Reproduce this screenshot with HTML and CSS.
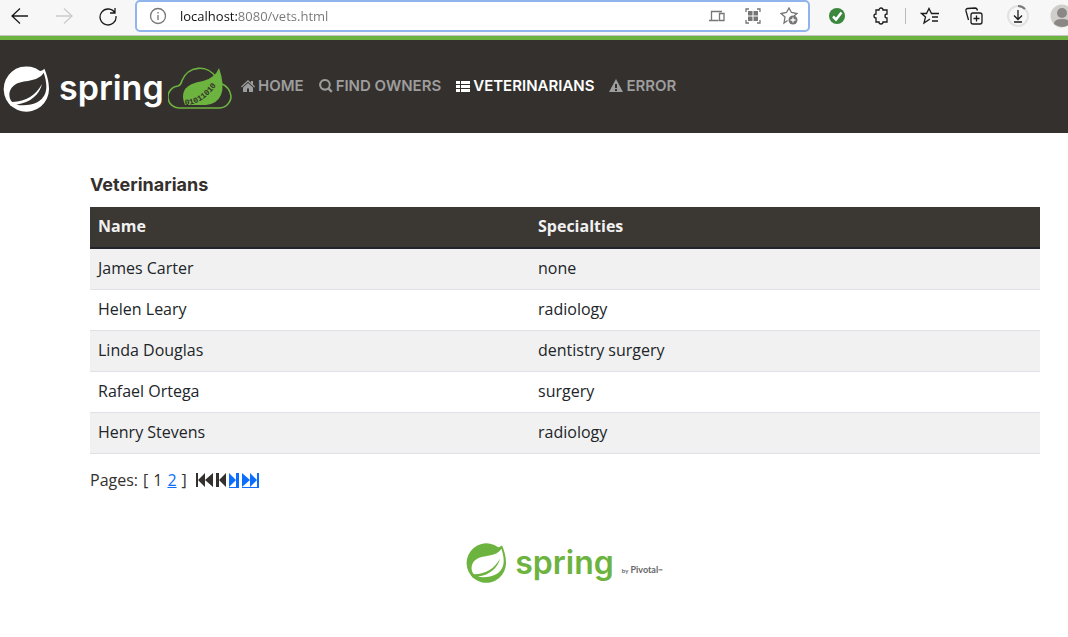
FILE: index.html
```html
<!DOCTYPE html>
<html lang="en">
<head>
<meta charset="utf-8">
<title>PetClinic :: Veterinarians</title>
<link rel="stylesheet" href="styles.css">
</head>
<body>
<svg class="defs" aria-hidden="true">
  <symbol id="leaf" viewBox="0 0 138 138">
    <path fill="currentColor" fill-rule="evenodd" d="M124 8 C131 24 138 45 138 68 A68 68 0 1 1 111 15 C117 14 121 11 124 8 Z M122 20 C104 50 60 40 36 56 C14 70 16 98 28 108 C70 106 98 88 117 54 C110 84 84 110 40 116 C60 120 86 118 104 108 C136 88 134 56 122 20 Z"/>
    <circle cx="27" cy="115" r="6" fill="currentColor"/>
  </symbol>
</svg>

<div class="toolbar">
  <div class="tools">
    <button class="tool" aria-label="Back"><svg viewBox="0 0 20 20"><path d="M18 10H2M10 2.500L2 10l8 7.500"/></svg></button>
    <button class="tool faded" aria-label="Forward"><svg viewBox="0 0 20 20"><path d="M2 10h16M10 2.500l8 7.500-8 7.500"/></svg></button>
    <button class="tool" aria-label="Reload"><svg viewBox="0 0 20 20"><path d="M17 7a8 8 0 1 0 1 3M17 2v5h-5"/></svg></button>
  </div>
  <div class="address">
    <svg class="small" viewBox="0 0 18 18"><circle cx="9" cy="9" r="7.500"/><path d="M9 8v5M9 5v1.500"/></svg>
    <input class="url" type="text" aria-label="Address" value="localhost:8080/vets.html">
    <svg class="small" viewBox="0 0 18 18"><path d="M3.500 13V4.500H14M1 13.500h9.500M11.500 6.500h4.500v7h-4.500z"/></svg>
    <svg class="small" viewBox="0 0 18 18"><path d="M2 5V2h3M13 2h3v3M16 13v3h-3M5 16H2v-3"/><path class="solid" d="M4 4h4.500v4.500H4zM9.500 4H14v4.500H9.500zM4 9.500h4.500V14H4zM9.500 9.500H14V14H9.500z"/></svg>
    <svg class="small" viewBox="0 0 18 18"><path d="M7.500 13.500L4 16l1-6L1 6.500l5.500-1L9 1l2.500 4.500 5.500 1-3 2.500"/><circle class="solid" cx="13" cy="13" r="4.500"/><path class="plus" d="M13 10.500v5M10.500 13h5"/></svg>
  </div>
  <div class="tools">
    <button class="tool" aria-label="Extension"><svg viewBox="0 0 20 20"><circle cx="10" cy="10" r="8" class="green"/><path class="tick" d="M6 10.500l3 3 5.500-7"/></svg></button>
    <button class="tool" aria-label="Extensions"><svg viewBox="0 0 20 20"><path d="M5 4h3a2 2 0 0 1 4 0h4v4a2 2 0 0 0 0 4v4h-4a2 2 0 0 1-4 0H5v-4a2 2 0 1 1 0-4z"/></svg></button>
  </div>
  <div class="tools ruled">
    <button class="tool" aria-label="Favorites"><svg viewBox="0 0 20 20"><path d="M10 13l-6 4 1.500-6L1.500 7.500h5L9 2.500l2.500 5H19M12 11h6M12 15h6"/></svg></button>
    <button class="tool" aria-label="Collections"><svg viewBox="0 0 20 20"><rect x="7" y="7" width="11" height="11" rx="2"/><path d="M12.500 9.500v6M9.500 12.500h6M4.500 14L2 5q-.5-2 1.500-2.500L11 2q2 0 2.500 2.500"/></svg></button>
    <button class="tool" aria-label="Downloads"><svg class="large" viewBox="0 0 24 24"><circle class="ring" cx="12" cy="12" r="10"/><path class="arc" d="M12 2a10 10 0 0 1 7 3"/><path d="M12 6v9M8 11.500l4 4 4-4M8 18h8"/></svg></button>
    <button class="tool" aria-label="Profile"><svg class="large" viewBox="0 0 24 24"><circle cx="12" cy="12" r="11.500" class="face"/><circle cx="12" cy="9" r="5" class="person"/><path class="person" d="M4 20q0-5 8-5t8 5q-8 6-16 0z"/></svg></button>
  </div>
</div>

<nav class="navbar">
  <a class="brand" href="#" aria-label="Spring">
    <svg class="leaf"><use href="#leaf"/></svg>
    <span class="wordmark">spring</span>
    <svg class="cloud" viewBox="0 0 64 44"><path class="outline" d="M12 42a11 11 0 0 1-2-22q3-1 4-5.500a19 19 0 0 1 34-3M52 17q10 4 11 13a12 12 0 0 1-12 12H12"/><path class="fill" d="M51 2q6 17 2 27-4 9-15 10H17q-4-9 0-16 5-6 18-8 12-3 16-13z"/><path id="arc" fill="none" d="M17 39q18 0 33-22"/><text class="bits"><textPath href="#arc">01011010</textPath></text></svg>
  </a>
  <ul class="menu">
    <li><a href="#"><svg viewBox="0 0 14 14"><path d="M7 1L0 7.500l.8.9L7 2.800l6.200 5.600.8-.9-2-1.900V2h-2v1.800zM2 8.500V13h4V9.500h2V13h4V8.500L7 4z"/></svg>HOME</a></li>
    <li><a href="#"><svg viewBox="0 0 14 14"><path fill-rule="evenodd" d="M6 0a5.800 5.800 0 1 0 3 10.700l3 3 1.700-1.700-3-3A5.800 5.800 0 0 0 6 0zm0 2a3.800 3.800 0 1 1 0 7.600A3.800 3.800 0 0 1 6 2z"/></svg>FIND OWNERS</a></li>
    <li><a class="active" href="#"><svg viewBox="0 0 14 14"><path d="M0 2h4v3H0zM5 2h9v3H5zM0 6h4v3H0zM5 6h9v3H5zM0 10h4v3H0zM5 10h9v3H5z"/></svg>VETERINARIANS</a></li>
    <li><a href="#"><svg viewBox="0 0 14 14"><path fill-rule="evenodd" d="M7 0l7 13H0zM6 5v4h2V5zm0 5v2h2v-2z"/></svg>ERROR</a></li>
  </ul>
</nav>

<main class="page">
  <h2 class="title">Veterinarians</h2>
  <table class="vets">
    <thead><tr><th class="name">Name</th><th>Specialties</th></tr></thead>
    <tbody>
      <tr><td>James Carter</td><td>none</td></tr>
      <tr><td>Helen Leary</td><td>radiology</td></tr>
      <tr><td>Linda Douglas</td><td>dentistry surgery</td></tr>
      <tr><td>Rafael Ortega</td><td>surgery</td></tr>
      <tr><td>Henry Stevens</td><td>radiology</td></tr>
    </tbody>
  </table>
  <div class="pages">
    <span>Pages:</span><span>[</span><span class="current">1</span><a href="#">2</a><span>]</span>
    <span class="steps">
      <svg class="wide" viewBox="0 0 17 14"><path d="M0 0h2v14H0zM9 0v14L2 7zM17 0v14L9 7z"/></svg>
      <svg class="slim" viewBox="0 0 10 14"><path d="M0 0h3v14H0zM10 0v14L3 7z"/></svg>
      <a href="#" aria-label="Next"><svg class="slim" viewBox="0 0 10 14"><path d="M7 0h3v14H7zM0 0v14l7-7z"/></svg></a>
      <a href="#" aria-label="Last"><svg class="wide" viewBox="0 0 17 14"><path d="M15 0h2v14h-2zM0 0v14l8-7zM8 0v14l7-7z"/></svg></a>
    </span>
  </div>
</main>

<footer class="footer">
  <svg class="leaf"><use href="#leaf"/></svg>
  <span class="wordmark">spring</span>
  <span class="pivotal"><small>by</small> Pivotal<small>™</small></span>
</footer>
</body>
</html>
```
FILE: styles.css
```css
* { box-sizing: border-box; }
body { margin: 0; overflow-x: hidden; background: #fff; color: #34302d; font: 16px/24px "Open Sans", "Noto Sans", sans-serif; }
a { color: #0d6efd; }
svg { display: block; flex: none; }
.defs { position: absolute; width: 0; height: 0; }

.toolbar { display: flex; align-items: flex-start; height: 36px; background: #f7f7f7; border-bottom: 1px solid #c4c4c4; overflow: hidden; }
.tools { display: flex; flex: none; }
.tool { display: flex; align-items: center; justify-content: center; width: 44px; height: 32px; padding: 0; border: 0; background: none; color: #1b1b1b; }
.tools:first-child { margin-left: -2px; margin-right: 5px; }
.tools:last-child { margin-right: -16px; }
.tool svg { width: 20px; height: 20px; fill: none; stroke: currentColor; stroke-width: 1.3; }
.tool .large { width: 24px; height: 24px; }
.tool.faded { color: #ccc; }
.ruled { position: relative; margin-left: 5px; }
.ruled::before { content: ""; position: absolute; left: -3px; top: 8px; height: 16px; border-left: 1px solid #bbb; }
.tool .green { fill: #3a873d; stroke: none; }
.tick { stroke: #fff; stroke-width: 2.5; }
.ring { stroke: #e2e2e2; stroke-width: 2; }
.arc { stroke: #777; stroke-width: 2; }
.face { fill: #d0cecb; stroke: none; }
.person { fill: #8b8784; stroke: none; }

.address { display: flex; flex: 1; align-items: center; gap: 18px; height: 32px; margin-right: 5px; padding: 0 10px 0 12px; border: 2px solid #8fb4ee; border-radius: 5px; background: #fff; color: #767676; }
.small { width: 18px; height: 18px; fill: none; stroke: currentColor; stroke-width: 1.3; }
.small .solid { fill: currentColor; stroke: none; }
.small .plus { stroke: #fff; }
.url { flex: 1; min-width: 0; margin-left: -5px; padding: 0; border: 0; outline: 0; font: 13px/20px "Open Sans", sans-serif; color: transparent; background: linear-gradient(to right, #111 57px, #767676 57px); -webkit-background-clip: text; background-clip: text; }

.navbar { display: flex; align-items: center; min-height: 97px; padding: 4px 0 0 3px; border-top: 4px solid #6db33f; background: #34302d; }
.brand { display: flex; align-items: center; height: 46px; color: #fff; text-decoration: none; }
.leaf { width: 46px; height: 46px; }
.wordmark { font: 600 34px/40px "Inter", sans-serif; }
.brand .wordmark { width: 106px; margin-left: 10px; padding-bottom: 2px; }
.cloud { width: 64px; height: 44px; margin: 0 0 2px 3px; }
.outline { fill: none; stroke: #6db33f; stroke-width: 1.6; }
.fill { fill: #6db33f; }
.bits { fill: #34302d; font: 700 8px "Liberation Mono", monospace; }
.menu { display: flex; gap: 15px; margin: 0 0 6px 9px; padding: 0; list-style: none; }
.menu a { display: flex; align-items: center; gap: 3px; color: #9d9d9d; font: 600 15px/20px "Inter", sans-serif; text-decoration: none; white-space: nowrap; }
.menu svg { width: 14px; height: 14px; fill: currentColor; }
.menu .active { color: #fff; }

.page { padding: 40px 28px 0 90px; }
.title { margin: 0 0 10px; font: 700 18px/24px "Inter", sans-serif; }
.vets { width: 100%; border-collapse: collapse; color: #212529; }
.vets th { padding: 7px 8px 9px; border-bottom: 2px solid #212529; background: #3b3733; color: #f1f1f1; font-weight: 700; text-align: left; }
.vets td { padding: 7px 8px 9px; border-bottom: 1px solid #dee2e6; }
.vets tbody tr:nth-child(odd) { background: #f1f1f1; }
.name { width: 440px; }
.pages { display: flex; align-items: center; gap: 5px; margin-top: 14px; }
.steps { display: flex; gap: 3px; margin-left: 4px; color: #34302d; }
.steps svg { height: 14px; fill: currentColor; }
.steps a { border-bottom: 1px solid; }
.wide { width: 17px; }
.slim { width: 10px; }

.footer { display: flex; align-items: center; justify-content: center; margin: 51px 0 0 61px; color: #6db33f; }
.footer .leaf { width: 40px; height: 40px; }
.footer .wordmark { margin-left: 9px; font-size: 32px; }
.pivotal { margin: 14px 0 0 8px; color: #666; font: 700 9px/12px "Lato", sans-serif; }
.pivotal small { font-size: 6px; }
```
